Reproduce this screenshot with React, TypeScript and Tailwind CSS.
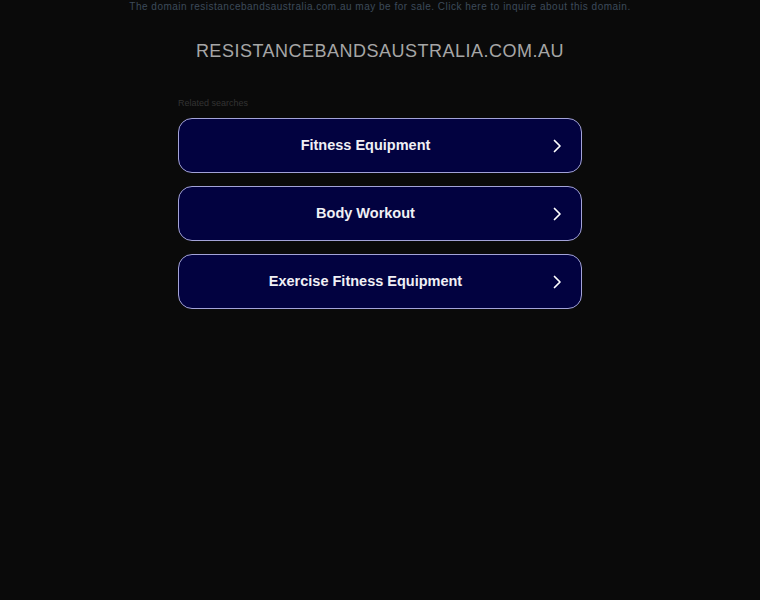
const searches = ['Fitness Equipment', 'Body Workout', 'Exercise Fitness Equipment'];

function Chevron() {
  return (
    <svg width="10" height="14" viewBox="0 0 10 14" fill="none" className="shrink-0">
      <path d="M2.5 1.5L8 7l-5.5 5.5" stroke="#ffffff" strokeWidth="1.7" strokeLinecap="round" strokeLinejoin="round" />
    </svg>
  );
}

export default function App() {
  return (
    <div className="min-h-[600px] bg-[#0a0a0a] font-['Liberation_Sans',Arial,sans-serif]">
      <div className="pt-[1px] text-center text-[10px] leading-[12px] tracking-[0.5px] text-[#3d4b5a]">
        The domain resistancebandsaustralia.com.au may be for sale. Click here to inquire about this domain.
      </div>
      <h1 className="mt-[28px] text-center text-[18px] leading-[20px] tracking-[0.5px] text-[#a6a6a6]">
        RESISTANCEBANDSAUSTRALIA.COM.AU
      </h1>
      <div className="mx-auto mt-[37px] w-[404px]">
        <div className="text-[9px] leading-[10px] text-[#333333]">Related searches</div>
        <div className="mt-[10px] flex flex-col gap-[13px]">
          {searches.map((s) => (
            <a
              key={s}
              href="#"
              className="flex h-[55px] items-center rounded-[14px] border border-[#a3a3d8] bg-[#020240] pr-[19px]"
            >
              <span className="flex-1 text-center text-[14.5px] font-bold text-[#f0f0f5]">{s}</span>
              <Chevron />
            </a>
          ))}
        </div>
      </div>
    </div>
  );
}
